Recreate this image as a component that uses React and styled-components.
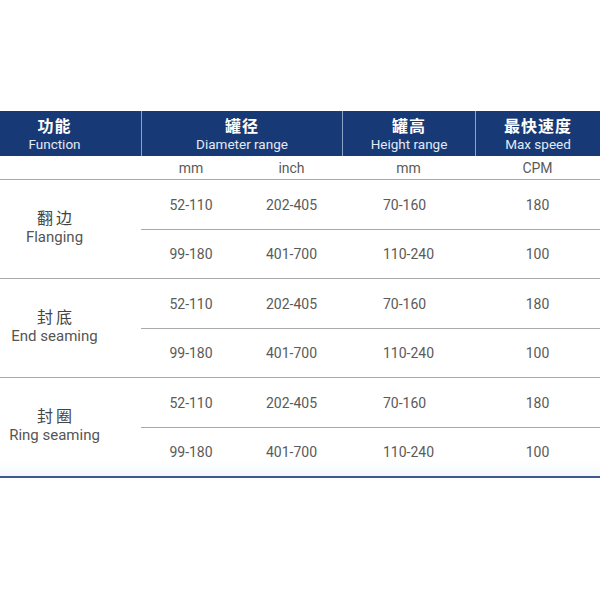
import React from "react";
import styled, { createGlobalStyle } from "styled-components";

const Global = createGlobalStyle`
  html, body { margin: 0; padding: 0; background: #fff; }
  body { font-family: Roboto, "Noto Sans CJK SC", sans-serif; }
`;

const Table = styled.div`
  margin-top: 111px;
  width: 600px;
`;

const HeaderRow = styled.div`
  display: grid;
  grid-template-columns: 141px 201px 133px 1fr;
  height: 45px;
  background: #173a76;
`;

const HeadCell = styled.div`
  display: flex;
  flex-direction: column;
  align-items: center;
  justify-content: center;
  border-left: ${(p) => (p.$first ? "none" : "1px solid #8ea2c6")};
  padding-right: ${(p) => (p.$first ? "32px" : "0")};
  padding-bottom: 1px;
`;

const HeadCn = styled.div`
  font-family: "Noto Sans CJK SC", sans-serif;
  font-weight: 700;
  font-size: 16px;
  line-height: 21px;
  letter-spacing: 1px;
  color: #fff;
`;

const HeadEn = styled.div`
  font-family: Roboto, sans-serif;
  font-size: 13.5px;
  line-height: 16px;
  color: #e4e9f3;
`;

const UnitsRow = styled.div`
  display: grid;
  grid-template-columns: 141px 100px 101px 133px 1fr;
  height: 24px;
  box-sizing: border-box;
  border-bottom: 1px solid #a9a9a9;
  align-items: center;
  font-size: 14px;
  color: #5a5a5a;
  text-align: center;
`;

const Unit = styled.div``;

const Group = styled.div`
  display: grid;
  grid-template-columns: 141px 1fr;
  border-bottom: ${(p) => (p.$last ? "2px solid #3f5a8e" : "1px solid #a9a9a9")};
  background: ${(p) => (p.$last ? "linear-gradient(to bottom, #fff 85%, #f6f8fc)" : "#fff")};
`;

const Label = styled.div`
  display: flex;
  flex-direction: column;
  align-items: center;
  justify-content: center;
  padding-right: 32px;
  padding-bottom: 6px;
`;

const LabelCn = styled.div`
  font-family: "Noto Sans CJK SC", sans-serif;
  font-size: 16px;
  line-height: 21px;
  letter-spacing: 3px;
  padding-left: 3px;
  color: #444;
`;

const LabelEn = styled.div`
  font-family: Roboto, sans-serif;
  font-size: 15px;
  line-height: 18px;
  color: #555;
`;

const Rows = styled.div`
  display: flex;
  flex-direction: column;
`;

const DataRow = styled.div`
  display: grid;
  grid-template-columns: 100px 101px 133px 1fr;
  align-items: center;
  height: ${(p) => (p.$first ? 50 : 48)}px;
  box-sizing: border-box;
  border-bottom: ${(p) => (p.$first ? "1px solid #a9a9a9" : "none")};
  font-size: 14px;
  color: #5a5a5a;
`;

const Cell = styled.div`
  text-align: ${(p) => (p.$left ? "left" : "center")};
  padding-left: ${(p) => (p.$left ? "41px" : "0")};
`;

const groups = [
  { cn: "翻边", en: "Flanging" },
  { cn: "封底", en: "End seaming" },
  { cn: "封圈", en: "Ring seaming" },
];

const rows = [
  ["52-110", "202-405", "70-160", "180"],
  ["99-180", "401-700", "110-240", "100"],
];

export default function App() {
  return (
    <>
      <Global />
      <Table>
        <HeaderRow>
          <HeadCell $first>
            <HeadCn>功能</HeadCn>
            <HeadEn>Function</HeadEn>
          </HeadCell>
          <HeadCell>
            <HeadCn>罐径</HeadCn>
            <HeadEn>Diameter range</HeadEn>
          </HeadCell>
          <HeadCell>
            <HeadCn>罐高</HeadCn>
            <HeadEn>Height range</HeadEn>
          </HeadCell>
          <HeadCell>
            <HeadCn>最快速度</HeadCn>
            <HeadEn>Max speed</HeadEn>
          </HeadCell>
        </HeaderRow>
        <UnitsRow>
          <Unit />
          <Unit>mm</Unit>
          <Unit>inch</Unit>
          <Unit>mm</Unit>
          <Unit>CPM</Unit>
        </UnitsRow>
        {groups.map((g, gi) => (
          <Group key={g.en} $last={gi === groups.length - 1}>
            <Label>
              <LabelCn>{g.cn}</LabelCn>
              <LabelEn>{g.en}</LabelEn>
            </Label>
            <Rows>
              {rows.map((r, ri) => (
                <DataRow key={ri} $first={ri === 0}>
                  <Cell>{r[0]}</Cell>
                  <Cell>{r[1]}</Cell>
                  <Cell $left>{r[2]}</Cell>
                  <Cell>{r[3]}</Cell>
                </DataRow>
              ))}
            </Rows>
          </Group>
        ))}
      </Table>
    </>
  );
}
